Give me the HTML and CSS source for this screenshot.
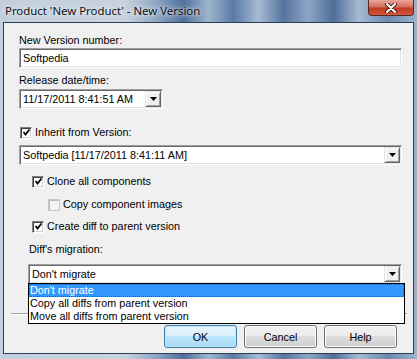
FILE: index.html
```html
<!DOCTYPE html>
<html lang="en">
<head>
    <meta charset="UTF-8">
    <meta name="viewport" content="width=device-width, initial-scale=1.0">
    <title>New Version</title>
    <link rel="stylesheet" href="styles.css">
</head>
<body>
    <div class="window">
        <div class="titlebar">
            <span class="title">Product 'New Product' - New Version</span>
            <div class="close">
                <svg width="14" height="10" viewBox="0 0 14 10">
                    <path d="M3 1 L11 9 M11 1 L3 9" stroke="#4a1e16" stroke-width="4" stroke-linecap="round"/>
                    <path d="M3 1 L11 9 M11 1 L3 9" stroke="#ffffff" stroke-width="2" stroke-linecap="round"/>
                </svg>
            </div>
        </div>

        <div class="client">
            <div class="label l1">New Version number:</div>
            <div class="field text">Softpedia</div>

            <div class="label l2">Release date/time:</div>
            <div class="field date">
                <span class="value">11/17/2011 8:41:51 AM</span>
                <span class="drop"><svg width="7" height="4" viewBox="0 0 7 4"><path d="M0 0 H7 L3.5 4 Z" fill="#000"/></svg></span>
            </div>

            <div class="check-row inherit">
                <span class="box checked"><svg width="9" height="9" viewBox="0 0 9 9"><path d="M1.5 4 L3.5 6.5 L7.5 1.5" stroke="#000" stroke-width="1.8" fill="none"/></svg></span>
                <span>Inherit from Version:</span>
            </div>
            <div class="field combo c1">
                <span class="value">Softpedia [11/17/2011 8:41:11 AM]</span>
                <span class="drop"><svg width="7" height="4" viewBox="0 0 7 4"><path d="M0 0 H7 L3.5 4 Z" fill="#000"/></svg></span>
            </div>

            <div class="check-row clone">
                <span class="box checked"><svg width="9" height="9" viewBox="0 0 9 9"><path d="M1.5 4 L3.5 6.5 L7.5 1.5" stroke="#000" stroke-width="1.8" fill="none"/></svg></span>
                <span>Clone all components</span>
            </div>
            <div class="check-row copy">
                <span class="box disabled"></span>
                <span>Copy component images</span>
            </div>
            <div class="check-row create">
                <span class="box checked"><svg width="9" height="9" viewBox="0 0 9 9"><path d="M1.5 4 L3.5 6.5 L7.5 1.5" stroke="#000" stroke-width="1.8" fill="none"/></svg></span>
                <span>Create diff to parent version</span>
            </div>

            <div class="label l3">Diff's migration:</div>
            <div class="field combo c2">
                <span class="value">Don't migrate</span>
                <span class="drop"><svg width="7" height="4" viewBox="0 0 7 4"><path d="M0 0 H7 L3.5 4 Z" fill="#000"/></svg></span>
                <ul class="list">
                    <li class="selected">Don't migrate</li>
                    <li>Copy all diffs from parent version</li>
                    <li>Move all diffs from parent version</li>
                </ul>
            </div>

            <div class="separator"></div>

            <div class="buttons">
                <div class="btn default">OK</div>
                <div class="btn">Cancel</div>
                <div class="btn">Help</div>
            </div>
        </div>
    </div>
</body>
</html>
```

FILE: styles.css
```css
body { margin: 0; }

.window {
    width: 417px;
    height: 359px;
    box-sizing: border-box;
    padding: 0 3px 5px 3px;
    background: linear-gradient(to right, #c3cfdc 0%, #c8d3df 30%, #8aa3c2 38%, #4f6f9a 44%, #9fb5cf 50%, #5a7aa5 56%, #a7bbd3 62%, #55759f 68%, #8ea6c4 74%, #4d6d98 80%, #a6bad2 86%, #6c89b0 93%, #9db2cc 100%);
    font-family: "Liberation Sans", Arial, sans-serif;
    font-size: 10.8px;
    color: #000;
}

.titlebar {
    height: 22px;
    display: flex;
    align-items: flex-start;
    padding-left: 2px;
}
.title {
    font-family: "Noto Sans", "Open Sans", sans-serif;
    font-size: 11.4px;
    line-height: 22px;
    color: #111;
    text-shadow: 0 0 6px #e6edf5, 0 0 3px #e6edf5;
}
.close {
    margin-left: auto;
    width: 46px;
    height: 16px;
    box-sizing: border-box;
    border: 1px solid #5b2b22;
    border-top: none;
    border-radius: 0 0 4px 4px;
    background: linear-gradient(#e9a79a 0%, #d6705e 45%, #c13a22 55%, #d2583f 100%);
    display: flex;
    align-items: center;
    justify-content: center;
}

.client {
    height: 332px;
    box-sizing: border-box;
    border: 1px solid #2c3f57;
    background: #f0f0f0;
    padding: 11px 11px 0 15px;
}

.label { line-height: 13px; height: 13px; }
.l2 { margin-top: 6px; }
.l3 { margin-top: 10px; margin-left: 10px; }

.field {
    position: relative;
    height: 20px;
    box-sizing: border-box;
    background: #fff;
    border-top: 1px solid #a0a0a0;
    border-left: 1px solid #a0a0a0;
    border-bottom: 1px solid #fff;
    border-right: 1px solid #fff;
    box-shadow: inset 1px 1px 0 #696969, inset -1px -1px 0 #e3e3e3;
    line-height: 18px;
    padding-left: 3px;
    display: flex;
    align-items: center;
}
.text { margin-top: 1px; width: 383px; }
.date { margin-top: 2px; width: 144px; }
.c1 { margin-top: 6px; width: 383px; }
.c2 { margin-top: 8px; margin-left: 9px; width: 374px; }

.value { flex: 1; }

.drop {
    width: 16px;
    height: 16px;
    margin-right: 1px;
    box-sizing: border-box;
    background: #f0f0f0;
    border-top: 1px solid #e3e3e3;
    border-left: 1px solid #e3e3e3;
    border-bottom: 1px solid #696969;
    border-right: 1px solid #696969;
    box-shadow: inset 1px 1px 0 #fff, inset -1px -1px 0 #a0a0a0;
    display: flex;
    align-items: center;
    justify-content: center;
}

.check-row {
    display: flex;
    align-items: center;
    height: 13px;
    line-height: 13px;
}
.inherit { margin-top: 17px; padding-left: 1px; }
.clone { margin-top: 10px; padding-left: 13px; }
.copy { margin-top: 10px; padding-left: 29px; }
.create { margin-top: 9px; padding-left: 13px; }

.box {
    width: 12px;
    height: 12px;
    box-sizing: border-box;
    margin-right: 3px;
    background: #fff;
    border-top: 1px solid #808080;
    border-left: 1px solid #808080;
    border-bottom: 1px solid #fff;
    border-right: 1px solid #fff;
    box-shadow: inset 1px 1px 0 #404040, inset -1px -1px 0 #d4d0c8;
    display: flex;
    align-items: center;
    justify-content: center;
}
.box.disabled {
    background: #f4f4f4;
    border-color: #c8c8c8;
    box-shadow: inset 1px 1px 0 #bcbcbc;
}

.list {
    position: absolute;
    top: 18px;
    left: -1px;
    width: 377px;
    box-sizing: border-box;
    margin: 0;
    padding: 0;
    list-style: none;
    background: #fff;
    border: 1px solid #000;
    z-index: 2;
}
.list li {
    height: 13px;
    line-height: 13px;
    padding-left: 1px;
}
.list li.selected {
    background: #3399ff;
    color: #fff;
    outline: 1px dotted #7a4a10;
    outline-offset: -1px;
}

.separator {
    margin: 29px 0 0 -8px;
    width: 396px;
    height: 1px;
    background: #a0a0a0;
    border-bottom: 1px solid #fff;
}

.buttons {
    display: flex;
    justify-content: flex-end;
    gap: 7px;
    margin-top: 10px;
    padding-right: 5px;
}
.btn {
    width: 73px;
    height: 23px;
    box-sizing: border-box;
    border: 1px solid #707070;
    border-radius: 3px;
    background: linear-gradient(#f2f2f2 0%, #ebebeb 50%, #dddddd 50%, #cfcfcf 100%);
    box-shadow: inset 0 0 0 1px #fcfcfc;
    display: flex;
    align-items: center;
    justify-content: center;
}
.btn.default {
    border-color: #3c7fb1;
    background: linear-gradient(#eaf6fd 0%, #d9f0fc 50%, #bee6fd 50%, #a7d9f5 100%);
    box-shadow: inset 0 0 0 1px #c4e5f6;
}
```
